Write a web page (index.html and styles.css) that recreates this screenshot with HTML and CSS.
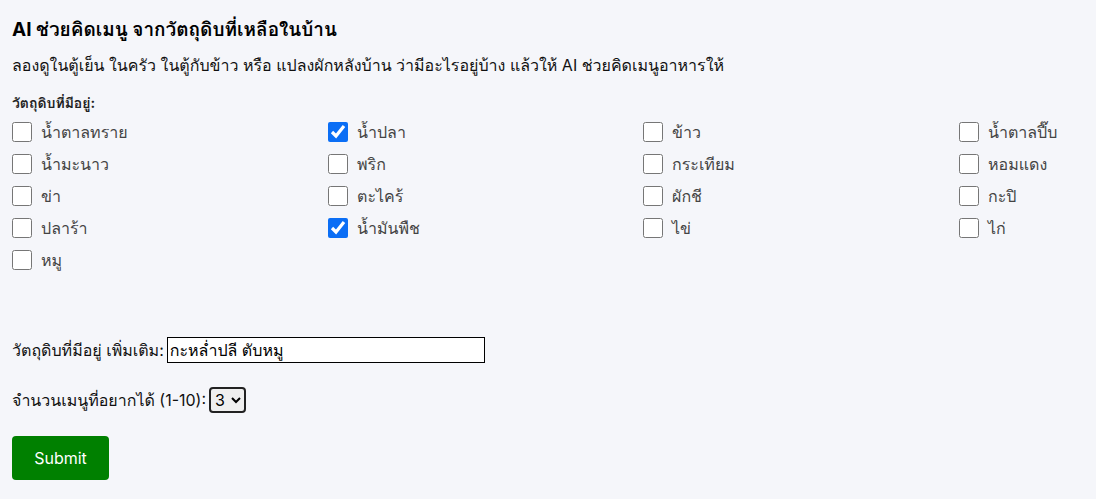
FILE: index.html
```html
<!DOCTYPE html>
<html lang="th">
<head>
<meta charset="utf-8">
<link rel="stylesheet" href="styles.css">
</head>
<body>
<main class="page">
  <h1 class="title">AI ช่วยคิดเมนู จากวัตถุดิบที่เหลือในบ้าน</h1>
  <p class="intro">ลองดูในตู้เย็น ในครัว ในตู้กับข้าว หรือ แปลงผักหลังบ้าน ว่ามีอะไรอยู่บ้าง แล้วให้ AI ช่วยคิดเมนูอาหารให้</p>
  <form class="form">
    <div class="group-label">วัตถุดิบที่มีอยู่:</div>
    <div class="grid">
      <label class="item"><input type="checkbox"><span>น้ำตาลทราย</span></label>
      <label class="item"><input type="checkbox" checked><span>น้ำปลา</span></label>
      <label class="item"><input type="checkbox"><span>ข้าว</span></label>
      <label class="item"><input type="checkbox"><span>น้ำตาลปี๊บ</span></label>
      <label class="item"><input type="checkbox"><span>น้ำมะนาว</span></label>
      <label class="item"><input type="checkbox"><span>พริก</span></label>
      <label class="item"><input type="checkbox"><span>กระเทียม</span></label>
      <label class="item"><input type="checkbox"><span>หอมแดง</span></label>
      <label class="item"><input type="checkbox"><span>ข่า</span></label>
      <label class="item"><input type="checkbox"><span>ตะไคร้</span></label>
      <label class="item"><input type="checkbox"><span>ผักชี</span></label>
      <label class="item"><input type="checkbox"><span>กะปิ</span></label>
      <label class="item"><input type="checkbox"><span>ปลาร้า</span></label>
      <label class="item"><input type="checkbox" checked><span>น้ำมันพืช</span></label>
      <label class="item"><input type="checkbox"><span>ไข่</span></label>
      <label class="item"><input type="checkbox"><span>ไก่</span></label>
      <label class="item"><input type="checkbox"><span>หมู</span></label>
    </div>
    <div class="field field-extra">
      <label class="field-label" for="extra">วัตถุดิบที่มีอยู่ เพิ่มเติม:</label><input id="extra" class="text-input" type="text" value="กะหล่ำปลี ตับหมู">
    </div>
    <div class="field field-count">
      <label class="field-label" for="count">จำนวนเมนูที่อยากได้ (1-10):</label><select id="count" class="select">
        <option>1</option><option>2</option><option selected>3</option><option>4</option><option>5</option>
        <option>6</option><option>7</option><option>8</option><option>9</option><option>10</option>
      </select>
    </div>
    <button type="button" class="submit">Submit</button>
  </form>
</main>
</body>
</html>
```

FILE: styles.css
```css
html, body {
  margin: 0;
  padding: 0;
  background: #f5f6fa;
}
body {
  font-family: "Inter", "Loma", sans-serif;
  color: #111;
}
.page {
  padding: 16px 12px 12px;
}
.title {
  margin: 0;
  font-size: 19px;
  font-weight: 700;
  line-height: 28px;
  color: #000;
}
.intro {
  margin: 9px 0 0;
  font-size: 16px;
  line-height: 24px;
}
.form {
  margin-top: 17px;
}
.group-label {
  font-size: 14px;
  font-weight: 700;
  line-height: 18px;
  color: #222;
}
.grid {
  display: grid;
  grid-template-columns: 316px 315px 316px 1fr;
  grid-auto-rows: 32px;
  margin-top: 4px;
}
.item {
  display: flex;
  align-items: center;
  gap: 9px;
  font-size: 16px;
  color: #444;
}
.item input {
  margin: 0;
  width: 20px;
  height: 20px;
  accent-color: #0b6ef5;
}
.field {
  display: flex;
  align-items: center;
  font-size: 16px;
  height: 26px;
}
.field-extra {
  margin-top: 61px;
}
.field-count {
  margin-top: 24px;
}
.field-label {
  margin-right: 3px;
}
.text-input {
  width: 318px;
  height: 26px;
  box-sizing: border-box;
  border: 1px solid #000;
  border-radius: 0;
  padding: 0 2px;
  font: inherit;
  font-size: 16px;
  background: #fff;
  color: #000;
}
.select {
  height: 26px;
  width: 37px;
  box-sizing: border-box;
  border: 2px solid #222;
  border-radius: 4px;
  font: inherit;
  font-size: 16px;
  background: #efefef;
}
.submit {
  display: block;
  margin-top: 23px;
  width: 97px;
  height: 44px;
  border: none;
  border-radius: 4px;
  background: #008000;
  color: #fff;
  font-family: "Inter", sans-serif;
  font-size: 16px;
  cursor: pointer;
}
```
